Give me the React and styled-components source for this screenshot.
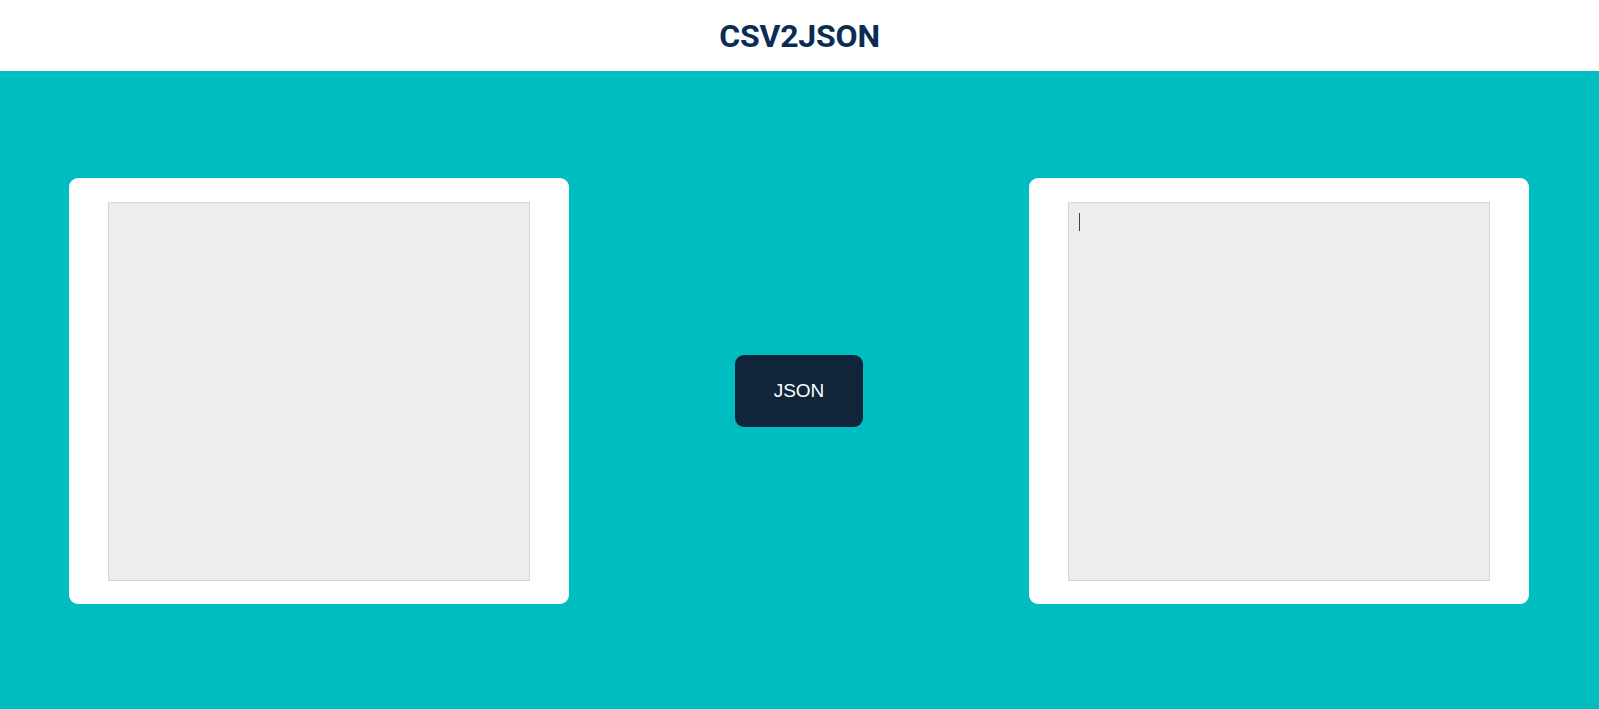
import React from 'react'
import styled, { createGlobalStyle } from 'styled-components'

const GlobalStyle = createGlobalStyle`
  * { box-sizing: border-box; }
  body {
    margin: 0;
    font-family: "Liberation Sans", Arial, sans-serif;
    background: #00bdc1;
  }
`

const Header = styled.header`
  height: 71px;
  background: #fff;
  display: flex;
  align-items: center;
  justify-content: center;
`
const Title = styled.h1`
  margin: 0;
  font-family: Roboto, "Liberation Sans", sans-serif;
  font-weight: 700;
  font-size: 32px;
  color: #0b2c55;
  letter-spacing: -0.2px;
`
const Main = styled.main`
  height: calc(100vh - 71px);
  padding: 2px 70px 0 69px;
  display: flex;
  align-items: center;
  justify-content: space-between;
  background: #00bdc1;
`
const Card = styled.div`
  width: 500px;
  height: 426px;
  background: #fff;
  border-radius: 9px;
  padding: 24px 39px 23px;
  display: flex;
`
const Field = styled.div`
  position: relative;
  flex: 1;
  display: flex;
`
const Area = styled.textarea`
  flex: 1;
  resize: none;
  background: #ededed;
  border: 1px solid #d4d4d4;
  padding: 10px;
  font-family: "Liberation Mono", monospace;
  font-size: 15px;
  color: #333;
  caret-color: transparent;
  outline: none;
`
const Caret = styled.span`
  position: absolute;
  left: 11px;
  top: 11px;
  width: 1px;
  height: 18px;
  background: #444;
  pointer-events: none;
`
const Button = styled.button`
  width: 128px;
  height: 72px;
  border: none;
  border-radius: 9px;
  background: #10253a;
  color: #fff;
  font-family: "Liberation Sans", Arial, sans-serif;
  font-size: 19px;
  cursor: pointer;
`

export default function App() {
  return (
    <>
      <GlobalStyle />
      <Header>
        <Title>CSV2JSON</Title>
      </Header>
      <Main>
        <Card>
          <Field>
            <Area />
          </Field>
        </Card>
        <Button>JSON</Button>
        <Card>
          <Field>
            <Area autoFocus />
            <Caret />
          </Field>
        </Card>
      </Main>
    </>
  )
}
